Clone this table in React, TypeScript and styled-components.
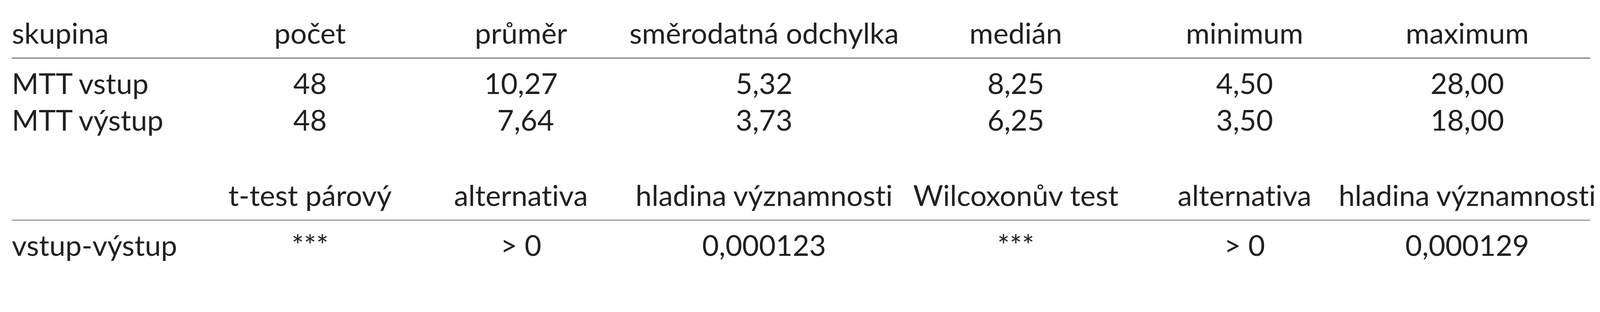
import styled, { createGlobalStyle } from 'styled-components';

// 1rem is a hundredth of the 4593px-wide frame, so the table keeps its
// proportions whatever the real css width of the window turns out to be
const GlobalStyle = createGlobalStyle`
  html {
    font-size: calc(100vw / 45.93);
  }

  html,
  body {
    margin: 0;
    padding: 0;
    background: #ffffff;
  }

  body {
    width: 100vw;
    height: 100vh;
    overflow: hidden;
    font-family: Lato, 'Open Sans', sans-serif;
    font-variant-ligatures: none;
    font-feature-settings: 'liga' 0, 'clig' 0;
    color: #231f20;
  }
`;

// shared column tracks, so both tables line up under the same centres
const COLUMNS = '5.715rem 5.69rem 6.42rem 7.54rem 6.91rem 6.225rem 6.56rem 1fr';

const Page = styled.div`
  padding: 0.42rem 0 0 0.34rem;
`;

const Table = styled.div<{ $offset?: number }>`
  width: 45.31rem;
  margin-top: ${(p) => p.$offset ?? 0}rem;
`;

const Row = styled.div`
  display: grid;
  grid-template-columns: ${COLUMNS};
  height: 1.06rem;
  font-size: 0.83rem;
  font-weight: 400;
  line-height: 1.06rem;
  white-space: nowrap;
`;

const Rule = styled.div`
  height: 0.04rem;
  margin: 0.17rem 0;
  background: #999999;
`;

const Label = styled.div`
  text-align: left;
`;

const Cell = styled.div`
  display: flex;
  justify-content: center;
`;

const Value = styled.span<{ $width?: number }>`
  display: inline-block;
  min-width: ${(p) => (p.$width ? `${p.$width}rem` : 'auto')};
  text-align: right;
`;

const statHeader = ['počet', 'průměr', 'směrodatná odchylka', 'medián', 'minimum', 'maximum'];

const statRows = [
  { group: 'MTT vstup', values: ['48', '10,27', '5,32', '8,25', '4,50', '28,00'] },
  { group: 'MTT výstup', values: ['48', '7,64', '3,73', '6,25', '3,50', '18,00'] },
];

const testHeader = [
  't-test párový',
  'alternativa',
  'hladina významnosti',
  'Wilcoxonův test',
  'alternativa',
  'hladina významnosti',
];

const testRows = [{ group: 'vstup-výstup', values: ['***', '> 0', '0,000123', '***', '> 0', '0,000129'] }];

const App = () => {
  return (
    <Page>
      <GlobalStyle />
      <Table>
        <Row>
          <Label>skupina</Label>
          {statHeader.map((title) => (
            <Cell key={title}>{title}</Cell>
          ))}
        </Row>
        <Rule />
        {statRows.map((row) => (
          <Row key={row.group}>
            <Label>{row.group}</Label>
            {row.values.map((value, i) => (
              <Cell key={i}>
                <Value $width={i === 1 ? 1.9 : undefined}>{value}</Value>
              </Cell>
            ))}
          </Row>
        ))}
      </Table>

      <Table $offset={1.1}>
        <Row>
          <Label />
          {testHeader.map((title, i) => (
            <Cell key={i}>{title}</Cell>
          ))}
        </Row>
        <Rule />
        {testRows.map((row) => (
          <Row key={row.group}>
            <Label>{row.group}</Label>
            {row.values.map((value, i) => (
              <Cell key={i}>{value}</Cell>
            ))}
          </Row>
        ))}
      </Table>
    </Page>
  );
};

export default App;
